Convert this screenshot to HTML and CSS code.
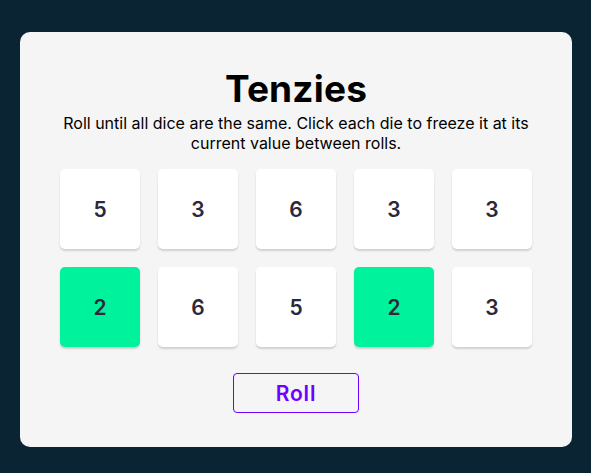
FILE: index.html
```html
<!DOCTYPE html>
<html lang="en">
<head>
<meta charset="utf-8">
<title>Tenzies</title>
<link rel="stylesheet" href="styles.css">
</head>
<body>
<main class="card">
  <h1 class="title">Tenzies</h1>
  <p class="instructions">Roll until all dice are the same. Click each die to freeze it at its current value between rolls.</p>
  <div class="dice">
    <button class="die">5</button>
    <button class="die">3</button>
    <button class="die">6</button>
    <button class="die">3</button>
    <button class="die">3</button>
    <button class="die held">2</button>
    <button class="die">6</button>
    <button class="die">5</button>
    <button class="die held">2</button>
    <button class="die">3</button>
  </div>
  <button class="roll">Roll</button>
</main>
</body>
</html>
```
FILE: styles.css
```css
* { box-sizing: border-box; }
html, body { margin: 0; }
body {
  background: #0B2434;
  padding: 32px 19px 26px 20px;
  font-family: Inter, "Noto Sans", sans-serif;
}
.card {
  background: #F5F5F5;
  border-radius: 10px;
  height: 415px;
  padding: 33px 40px 0;
  display: flex;
  flex-direction: column;
  align-items: center;
}
.title {
  margin: 0;
  font-size: 37px;
  line-height: 48px;
  font-weight: 700;
  color: #000;
  letter-spacing: 0.005em;
}
.instructions {
  margin: 0;
  font-size: 16px;
  line-height: 20px;
  text-align: center;
  color: #000;
}
.dice {
  margin-top: 16px;
  display: grid;
  grid-template-columns: repeat(5, 80px);
  grid-auto-rows: 80px;
  gap: 18px;
}
.die {
  border: none;
  border-radius: 5px;
  background: #FFFFFF;
  box-shadow: 0 2px 2px rgba(0, 0, 0, 0.15);
  font-family: Inter, "Noto Sans", sans-serif;
  font-size: 21px;
  font-weight: 600;
  color: #2B283A;
  padding: 0;
}
.die.held { background: #00F29C; }
.roll {
  margin-top: 26px;
  width: 126px;
  height: 40px;
  border: 1px solid #7000FF;
  border-radius: 4px;
  background: transparent;
  color: #7000FF;
  font-family: Inter, "Noto Sans", sans-serif;
  font-size: 21px;
  font-weight: 600;
  letter-spacing: 0.04em;
  padding: 0;
}
```
